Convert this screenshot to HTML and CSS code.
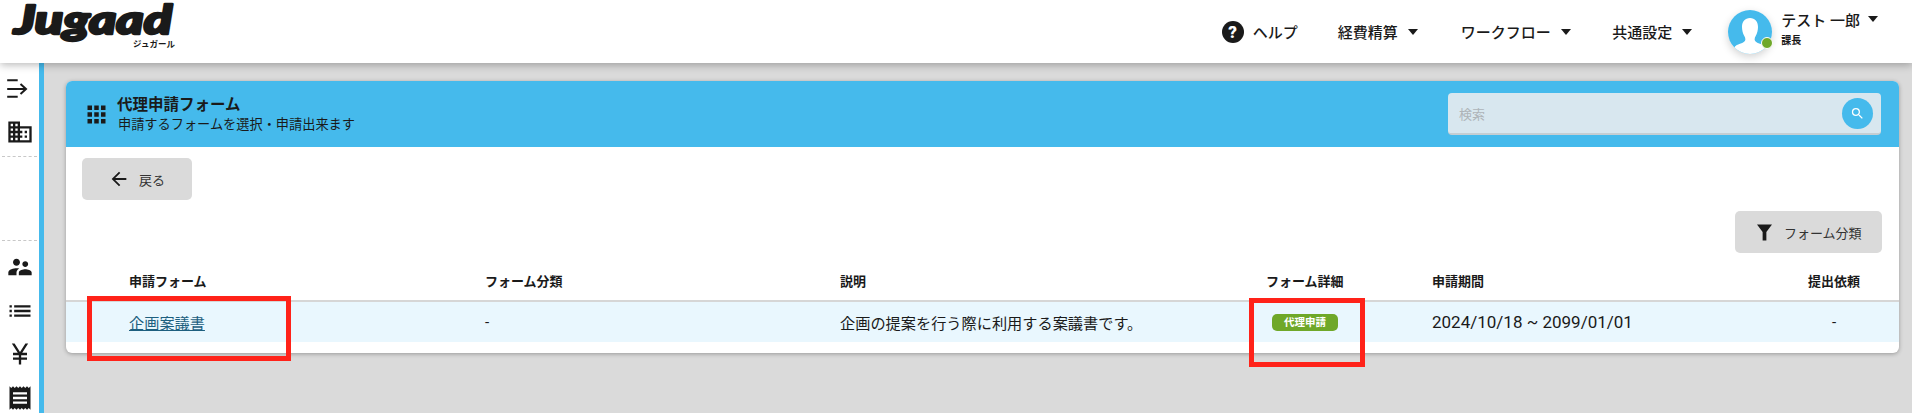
FILE: index.html
```html
<!DOCTYPE html>
<html lang="ja">
<head>
<meta charset="utf-8">
<title>代理申請フォーム</title>
<link rel="stylesheet" href="styles.css">
</head>
<body>
<div class="page">
  <header class="topbar">
    <div class="logo">
      <svg class="logo-svg" viewBox="0 0 190 50" aria-label="Jugaad">
        <text class="logo-text" x="14" y="34" textLength="158" lengthAdjust="spacingAndGlyphs">Jugaad</text>
      </svg>
      <span class="logo-sub">ジュガール</span>
    </div>
    <nav class="nav">
      <a class="nav-help">
        <span class="help-icon">?</span>
        <span>ヘルプ</span>
      </a>
      <a class="nav-item nav-expense">経費精算<i class="caret"></i></a>
      <a class="nav-item nav-flow">ワークフロー<i class="caret"></i></a>
      <a class="nav-item nav-common">共通設定<i class="caret"></i></a>
      <div class="user">
        <div class="avatar">
          <svg class="avatar-svg" viewBox="0 0 44 44">
            <circle cx="22" cy="22" r="22" fill="#45baec"/>
            <clipPath id="av"><circle cx="22" cy="22" r="22"/></clipPath>
            <g clip-path="url(#av)">
              <path fill="#fff" d="M22 8c-5 0-8 3.500-8 9 0 3 .8 6.500 2.300 9 .8 1.300 1.200 2.500 1 4-.2 1.500-2 2.800-5.300 3.800-2.500.8-5 2-6 4.200v8h32v-8c-1-2.200-3.500-3.400-6-4.200-3.300-1-5.100-2.300-5.300-3.800-.2-1.500.2-2.700 1-4 1.500-2.500 2.300-6 2.300-9 0-5.500-3-9-8-9z"/>
            </g>
          </svg>
          <span class="status-dot"></span>
        </div>
        <div class="user-text">
          <div class="user-name">テスト 一郎<i class="caret caret-user"></i></div>
          <div class="user-role">課長</div>
        </div>
      </div>
    </nav>
  </header>
  <div class="body-row">
    <aside class="sidebar">
      <div class="side-group side-top">
        <svg class="side-icon side-icon-line" viewBox="0 0 28 28"><path d="M1.200 5.300h10.500M1.200 21.700h10.500M1.200 14h18.500M14.500 9l5.500 5-5.500 5"/></svg>
        <svg class="side-icon" viewBox="0 0 24 24"><path d="M12 7V3H2v18h20V7H12zM6 19H4v-2h2v2zm0-4H4v-2h2v2zm0-4H4V9h2v2zm0-4H4V5h2v2zm4 12H8v-2h2v2zm0-4H8v-2h2v2zm0-4H8V9h2v2zm0-4H8V5h2v2zm10 12h-8v-2h2v-2h-2v-2h2v-2h-2V9h8v10zm-2-8h-2v2h2v-2zm0 4h-2v2h2v-2z"/></svg>
      </div>
      <div class="side-gap"></div>
      <div class="side-group side-bottom">
        <svg class="side-icon" viewBox="0 0 24 24"><path d="M16.500 12c1.380 0 2.490-1.120 2.490-2.500S17.880 7 16.500 7C15.120 7 14 8.120 14 9.500s1.120 2.500 2.500 2.500zM9 11c1.660 0 2.990-1.340 2.990-3S10.660 5 9 5C7.340 5 6 6.340 6 8s1.340 3 3 3zm7.500 3c-1.830 0-5.500.92-5.500 2.750V19h11v-2.250c0-1.830-3.670-2.750-5.500-2.750zM9 13c-2.330 0-7 1.170-7 3.500V19h7v-2.250c0-.85.33-2.340 2.370-3.470C10.500 13.100 9.660 13 9 13z"/></svg>
        <svg class="side-icon" viewBox="0 0 24 24"><path d="M3 13h2v-2H3v2zm0 4h2v-2H3v2zm0-8h2V7H3v2zm4 4h14v-2H7v2zm0 4h14v-2H7v2zM7 7v2h14V7H7z"/></svg>
        <svg class="side-icon" viewBox="0 0 24 24"><path d="M13.920 11H18v2h-5v2h5v2h-5v4h-2v-4H6v-2h5v-2H6v-2h4.080L5 3h2.370L12 10.290 16.630 3H19z"/></svg>
        <svg class="side-icon" viewBox="0 0 24 24"><path d="M18 17H6v-2h12v2zm0-4H6v-2h12v2zm0-4H6V7h12v2zM3 22l1.500-1.500L6 22l1.500-1.500L9 22l1.500-1.500L12 22l1.500-1.500L15 22l1.500-1.500L18 22l1.500-1.500L21 22V2l-1.500 1.500L18 2l-1.500 1.500L15 2l-1.500 1.500L12 2l-1.500 1.500L9 2 7.500 3.500 6 2 4.500 3.500 3 2v20z"/></svg>
      </div>
    </aside>
    <main class="content">
      <section class="card">
        <div class="card-head">
          <svg class="apps-icon" viewBox="0 0 24 24"><path d="M4 8h4V4H4v4zm6 12h4v-4h-4v4zm-6 0h4v-4H4v4zm0-6h4v-4H4v4zm6 0h4v-4h-4v4zm6-10v4h4V4h-4zm-6 4h4V4h-4v4zm6 6h4v-4h-4v4zm0 6h4v-4h-4v4z"/></svg>
          <div class="head-text">
            <div class="head-title">代理申請フォーム</div>
            <div class="head-sub">申請するフォームを選択・申請出来ます</div>
          </div>
          <div class="search">
            <span class="search-ph">検索</span>
            <span class="search-btn">
              <svg viewBox="0 0 24 24"><path fill="#fff" d="M15.500 14h-.79l-.28-.27A6.470 6.470 0 0 0 16 9.500 6.500 6.500 0 1 0 9.500 16c1.610 0 3.090-.59 4.230-1.570l.27.28v.79l5 4.990L20.490 19l-4.990-5zm-6 0C7.010 14 5 11.990 5 9.500S7.010 5 9.500 5 14 7.010 14 9.500 11.990 14 9.500 14z"/></svg>
            </span>
          </div>
        </div>
        <div class="card-body">
          <button class="btn btn-back">
            <svg viewBox="0 0 24 24"><path d="M20 11H7.830l5.590-5.590L12 4l-8 8 8 8 1.410-1.410L7.830 13H20v-2z"/></svg>
            <span>戻る</span>
          </button>
          <div class="filter-row">
            <button class="btn btn-filter">
              <svg class="funnel" viewBox="0 0 16 17"><path d="M0 0h16L10 8v9H6V8z"/></svg>
              <span>フォーム分類</span>
            </button>
          </div>
          <div class="table">
            <div class="tr th">
              <div>申請フォーム</div>
              <div>フォーム分類</div>
              <div>説明</div>
              <div>フォーム詳細</div>
              <div>申請期間</div>
              <div class="cell-center">提出依頼</div>
            </div>
            <div class="tr td">
              <div><a class="form-link">企画案議書</a></div>
              <div>-</div>
              <div>企画の提案を行う際に利用する案議書です。</div>
              <div><span class="badge">代理申請</span></div>
              <div class="cell-date">2024/10/18 ~ 2099/01/01</div>
              <div class="cell-center">-</div>
            </div>
          </div>
        </div>
      </section>
    </main>
  </div>
  <div class="mark mark-link"></div>
  <div class="mark mark-badge"></div>
</div>
</body>
</html>
```
FILE: styles.css
```css
* { box-sizing: border-box; }
html, body { margin: 0; padding: 0; height: 100%; overflow: hidden; }
body {
  font-family: Roboto, "Noto Sans CJK JP", sans-serif;
  color: #1a1a1a;
  background: #dadada;
}
.page { position: relative; width: 1912px; height: 413px; display: flex; flex-direction: column; overflow: hidden; }

.topbar {
  flex: 0 0 63px;
  height: 63px;
  background: #fff;
  display: flex;
  justify-content: space-between;
  position: relative;
  z-index: 2;
  box-shadow: 0 2px 8px rgba(0,0,0,.28);
}
.logo { position: relative; width: 190px; height: 63px; }
.logo-svg { position: absolute; left: 0; top: 0; width: 190px; height: 50px; }
.logo-text {
  font-family: Lato, sans-serif;
  font-weight: 900;
  font-style: italic;
  font-size: 40px;
  fill: #1a1a1a;
  stroke: #1a1a1a;
  stroke-width: 2.500px;
  stroke-linejoin: round;
}
.logo-sub {
  position: absolute;
  left: 133px;
  top: 38px;
  font-size: 8.500px;
  line-height: 13px;
  font-weight: 700;
  white-space: nowrap;
}
.nav { display: flex; align-items: center; font-size: 15px; font-weight: 500; }
.nav-help { display: flex; align-items: center; gap: 9px; margin-right: 40px; }
.help-icon {
  width: 22px; height: 22px; border-radius: 50%;
  background: #1a1a1a; color: #fff;
  font-size: 17px; font-weight: 900; line-height: 22px; text-align: center;
}
.nav-item { display: flex; align-items: center; white-space: nowrap; }
.nav-expense { margin-right: 43px; }
.nav-flow { margin-right: 41.500px; }
.nav-common { margin-right: 36px; }
.caret {
  display: inline-block;
  width: 0; height: 0;
  border-left: 5.500px solid transparent;
  border-right: 5.500px solid transparent;
  border-top: 6px solid #1a1a1a;
  margin-left: 10px;
}
.user { display: flex; align-items: flex-start; margin-right: 34px; }
.avatar { position: relative; width: 44px; height: 44px; margin-top: 1px; border-radius: 50%; box-shadow: 0 3px 8px rgba(0,0,0,.18); }
.avatar-svg { display: block; width: 44px; height: 44px; }
.status-dot {
  position: absolute; right: -1px; bottom: 5px;
  width: 12px; height: 12px; border-radius: 50%;
  background: #6fa829; border: 1.500px solid #fff;
}
.user-text { margin-left: 9px; padding-top: 2px; }
.user-name { font-size: 15px; line-height: 20px; white-space: nowrap; display: flex; align-items: center; }
.caret-user { margin-left: 8px; margin-top: -4px; }
.user-role { font-size: 10px; line-height: 14px; font-weight: 700; margin-top: 3px; }

.body-row { flex: 1; display: flex; min-height: 0; }
.sidebar {
  flex: 0 0 44px;
  background: #fff;
  border-right: 5px solid #45baec;
  display: flex;
  flex-direction: column;
}
.side-group { display: flex; flex-direction: column; align-items: center; }
.side-top { gap: 15px; padding: 12px 0 0; border-bottom: 1px dashed #c8c8c8; margin: 0 2px; height: 94px; }
.side-gap { height: 83px; }
.side-bottom { gap: 15.500px; padding: 12px 0 0; border-top: 1px dashed #c8c8c8; margin: 0 2px; }
.side-icon { display: block; width: 28px; height: 28px; fill: #1a1a1a; flex: none; }
.side-icon-line { fill: none; stroke: #1a1a1a; stroke-width: 2; }

.content { flex: 1; padding: 18px 13px 0 22px; min-width: 0; }
.card {
  background: #fff;
  border-radius: 6px;
  height: 272px;
  box-shadow: 0 1px 4px rgba(0,0,0,.3);
  overflow: hidden;
}
.card-head {
  height: 66px;
  background: #45baec;
  display: flex;
  align-items: center;
  padding: 0 18px 0 17px;
}
.apps-icon { width: 27px; height: 27px; fill: #1a1a1a; flex: none; }
.head-text { margin-left: 8px; flex: 1; }
.head-title { font-size: 15.500px; line-height: 20px; font-weight: 700; margin-left: -1px; }
.head-sub { font-size: 13.200px; line-height: 18px; margin-top: 1px; }
.search {
  width: 433px; height: 42px;
  background: #d8e7ef;
  border-radius: 4px;
  border-bottom: 2px solid #c4ced3;
  display: flex; align-items: center; justify-content: space-between;
  padding: 0 8px 0 11px;
}
.search-ph { font-size: 13px; color: #aeb4b8; }
.search-btn {
  width: 31px; height: 31px; border-radius: 50%;
  background: #45baec;
  display: flex; align-items: center; justify-content: center;
}
.search-btn svg { width: 15px; height: 15px; }

.card-body { display: flex; flex-direction: column; }
.btn {
  border: 0;
  background: #dadada;
  border-radius: 5px;
  height: 42px;
  font: inherit;
  font-size: 13px;
  color: #333;
  display: flex;
  align-items: center;
  padding: 0;
}
.btn-back { width: 110px; margin: 11px 0 0 16px; padding-left: 30px; gap: 9px; }
.btn-back svg { width: 22px; height: 22px; fill: #1a1a1a; flex: none; margin-left: -4px; }
.filter-row { display: flex; justify-content: flex-end; margin-top: 11px; padding-right: 17px; }
.btn-filter { width: 147px; padding-left: 22px; gap: 12px; }
.funnel { width: 15px; height: 17px; fill: #1a1a1a; flex: none; }

.tr {
  display: grid;
  grid-template-columns: 356px 355px 426px 166px 352px 100px;
  padding-left: 63px;
  align-items: center;
}
.th { height: 49px; font-size: 13px; font-weight: 700; padding-top: 8px; border-bottom: 2px solid #d6d6d6; }
.td { height: 40px; font-size: 15.200px; background: #e9f7fe; }
.cell-center { text-align: center; }
.cell-date { font-size: 17px; }
.form-link { color: #1d5f7f; text-decoration: underline; }
.badge {
  display: inline-block;
  margin-left: 6px;
  width: 66px; height: 17px;
  background: #6fa829;
  border-radius: 5px;
  color: #fff;
  font-size: 10.500px;
  font-weight: 700;
  line-height: 17px;
  text-align: center;
  vertical-align: middle;
}

.mark { position: absolute; border: 5px solid #ff2219; z-index: 3; }
.mark-link { left: 87px; top: 296px; width: 204px; height: 65px; }
.mark-badge { left: 1249px; top: 298px; width: 116px; height: 69px; }
```
